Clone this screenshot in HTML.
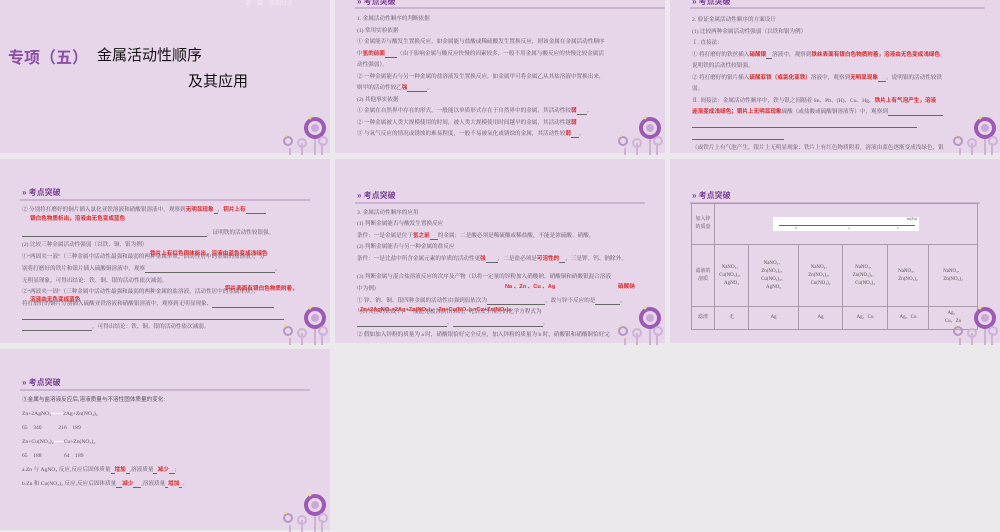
<!DOCTYPE html>
<html><head><meta charset="utf-8"><style>
*{margin:0;padding:0;box-sizing:border-box}
body{width:1000px;height:530px;background:#ebe9ec;position:relative;overflow:hidden;font-family:"Liberation Serif","Noto Serif CJK SC",serif;color:#555}
.p{position:absolute;background:#e7d6e9;overflow:hidden}
.t{position:absolute;font-size:5.6px;white-space:nowrap;line-height:1;color:#5a5060}
.r{color:#d42a2a;font-weight:bold;font-family:"Liberation Sans","Noto Sans CJK SC",sans-serif}
.u{display:inline-block;border-bottom:0.6px solid #666;vertical-align:bottom}
.h{position:absolute;font-family:"Liberation Sans","Noto Sans CJK SC",sans-serif;font-weight:bold;font-size:8px;color:#7a3f95;white-space:nowrap}
.hl{position:absolute;height:1.5px;background:#cdb3d3}
.deco{position:absolute;width:50px;height:42px}
table{border-collapse:collapse;position:absolute}
td{border:0.7px solid #a89aa9;font-size:5px;text-align:center;color:#555;line-height:1.6}
</style></head><body>

<!-- panel 1 -->
<div class="p" style="left:0;top:0;width:330px;height:153px">
<div class="t" style="left:245px;top:1px;color:#fff;opacity:.6;font-size:6px">第一篇　基础过关</div>
<div style="position:absolute;left:8px;top:44px;font:bold 16px 'Liberation Sans','Noto Sans CJK SC',sans-serif;color:#8a4fa6">专项（五）</div>
<div style="position:absolute;left:97px;top:44px;font:15px 'Liberation Sans','Noto Sans CJK SC',sans-serif;color:#111">金属活动性顺序</div>
<div style="position:absolute;left:188px;top:70px;font:15px 'Liberation Sans','Noto Sans CJK SC',sans-serif;color:#111">及其应用</div>
</div>

<!-- panel 2 -->
<div class="p" style="left:335px;top:0;width:330px;height:153px">
<div class="h" style="left:22px;top:-4px">» 考点突破</div>
<div class="hl" style="left:20px;top:7px;width:310px"></div>
<div class="t" style="left:22px;top:17px">1. 金属活动性顺序的判断依据</div>
<div class="t" style="left:22px;top:29px">(1) 常用实验依据</div>
<div class="t" style="left:22px;top:40px">① 金属能否与酸发生置换反应，如金属能与盐酸或稀硫酸发生置换反应，则该金属在金属活动性顺序</div>
<div class="t" style="left:22px;top:52px">中<span class="r">氢的前面</span><span class="u" style="width:12px"></span>（由于影响金属与酸反应快慢的因素较多，一般不用金属与酸反应的快慢比较金属活</div>
<div class="t" style="left:22px;top:63px">动性强弱）。</div>
<div class="t" style="left:22px;top:75px">② 一种金属能否与另一种金属的盐溶液发生置换反应，如金属甲可将金属乙从其盐溶液中置换出来，</div>
<div class="t" style="left:22px;top:86px">则甲的活动性较乙<span class="r">强</span><span class="u" style="width:20px"></span>。</div>
<div class="t" style="left:22px;top:98px">(2) 其他事实依据</div>
<div class="t" style="left:22px;top:109px">① 金属在自然界中存在的形式，一般能以单质形式存在于自然界中的金属，其活动性较<span class="r">弱</span><span class="u" style="width:10px"></span>。</div>
<div class="t" style="left:22px;top:121px">② 一种金属被人类大规模使用的时间，被人类大规模使用时间越早的金属，其活动性越<span class="r">弱</span></div>
<div class="t" style="left:22px;top:132px">③ 与氧气反应的情况或锈蚀的难易程度，一般不易被氧化或锈蚀的金属，其活动性较<span class="r">弱</span><span class="u" style="width:8px"></span>。</div>
</div>

<!-- panel 3 -->
<div class="p" style="left:670px;top:0;width:330px;height:153px">
<div class="h" style="left:22px;top:-4px">» 考点突破</div>
<div class="hl" style="left:20px;top:7px;width:295px"></div>
<div class="t" style="left:22px;top:18px">2. 验证金属活动性顺序的方案设计</div>
<div class="t" style="left:22px;top:30px">(1) 比较两种金属活动性强弱（以铁和银为例）</div>
<div class="t" style="left:22px;top:41px">Ⅰ. 直接法：</div>
<div class="t" style="left:22px;top:53px">① 将打磨好的铁丝插入<span class="r">硝酸银</span><span class="u" style="width:6px"></span>溶液中，观察到<span class="r">铁丝表面有银白色物质附着，溶液由无色变成浅绿色</span>，</div>
<div class="t" style="left:22px;top:64px">说明铁的活动性较银强。</div>
<div class="t" style="left:22px;top:76px">② 将打磨好的银片插入<span class="r">硫酸亚铁（或氯化亚铁）</span>溶液中，观察到<span class="r">无明显现象</span><span class="u" style="width:8px"></span>，说明银的活动性较铁</div>
<div class="t" style="left:22px;top:87px">弱。</div>
<div class="t" style="left:22px;top:99px">Ⅱ. 间接法：金属活动性顺序中，铁与银之间隔着 Sn、Pb、(H)、Cu、Hg，<span class="r">铁片上有气泡产生，溶液</span></div>
<div class="t" style="left:22px;top:110px"><span class="r">逐渐变成浅绿色；银片上无明显现象</span>硫酸（或盐酸或硫酸铜溶液等）中，观察到<span class="u" style="width:55px"></span></div>
<div class="t" style="left:22px;top:122px"><span class="u" style="width:225px"></span></div>
<div class="t" style="left:22px;top:134px"><span class="u" style="width:92px"></span></div>
<div class="t" style="left:22px;top:146px">（或铁片上有气泡产生，银片上无明显现象；铁片上有红色物质附着，溶液由蓝色逐渐变成浅绿色，银</div>
</div>

<!-- panel 4 -->
<div class="p" style="left:0;top:159px;width:330px;height:184px">
<div class="h" style="left:22px;top:28px">» 考点突破</div>
<div class="hl" style="left:20px;top:40px;width:290px"></div>
<div class="t" style="left:22px;top:49px">② 分别将打磨好的铜片插入氯化亚铁溶液和硝酸银溶液中，观察到<span class="r">无明显现象</span><span class="u" style="width:4px"></span>，<span class="r">铜片上有</span><span class="u" style="width:20px"></span></div>
<div class="t" style="left:30px;top:58px"><span class="r">银白色物质析出，溶液由无色变成蓝色</span></div>
<div class="t" style="left:22px;top:72px"><span class="u" style="width:185px"></span>，证明铁的活动性较银强。</div>
<div class="t" style="left:22px;top:84px">(2) 比较三种金属活动性强弱（以铁、铜、银为例）</div>
<div class="t" style="left:22px;top:96px">①“两固夹一液”（三种金属中活动性最强和最弱的两种金属单质，活动性居中的金属的盐溶液），分</div>
<div class="t" style="left:150px;top:93px"><span class="r">铁片上有红色固体析出，溶液由蓝色变成浅绿色</span></div>
<div class="t" style="left:22px;top:108px">别将打磨好的铁片和银片插入硫酸铜溶液中，观察<span class="u" style="width:130px"></span>，</div>
<div class="t" style="left:22px;top:120px">无明显现象，可得出结论：铁、铜、银的活动性依次减弱。</div>
<div class="t" style="left:22px;top:131px">②“两液夹一固”（三种金属中活动性最强和最弱的两种金属的盐溶液，活动性居中的金属单质），</div>
<div class="t" style="left:225px;top:128px"><span class="r">铜片表面有银白色物质附着，</span></div>
<div class="t" style="left:22px;top:143px">将打磨好的铜片分别插入硫酸亚铁溶液和硝酸银溶液中，观察到无明显现象、<span class="u" style="width:62px"></span></div>
<div class="t" style="left:30px;top:139px"><span class="r">溶液由无色变成蓝色</span></div>
<div class="t" style="left:22px;top:155px"><span class="u" style="width:262px"></span></div>
<div class="t" style="left:22px;top:166px"><span class="u" style="width:70px"></span>，可得出结论：铁、铜、银的活动性依次减弱。</div>
</div>

<!-- panel 5 -->
<div class="p" style="left:335px;top:159px;width:330px;height:184px">
<div class="h" style="left:22px;top:31px">» 考点突破</div>
<div class="hl" style="left:20px;top:43px;width:290px"></div>
<div class="t" style="left:22px;top:52px">3. 金属活动性顺序的应用</div>
<div class="t" style="left:22px;top:63px">(1) 判断金属能否与酸发生置换反应</div>
<div class="t" style="left:22px;top:75px">条件：一是金属是位于<span class="r">氢之前</span><span class="u" style="width:8px"></span>的金属；二是酸必须是稀硫酸或稀盐酸，不能是浓硫酸、硝酸。</div>
<div class="t" style="left:22px;top:86px">(2) 判断金属能否与另一种金属的盐反应</div>
<div class="t" style="left:22px;top:98px">条件：一是比盐中所含金属元素的单质的活动性更<span class="r">强</span><span class="u" style="width:12px"></span>，二是盐必须是<span class="r">可溶性的</span><span class="u" style="width:6px"></span>，三是钾、钙、钠除外。</div>
<div class="t" style="left:22px;top:116px">(3) 判断金属与混合盐溶液反应的次序及产物（以将一定量的锌粉加入硝酸钠、硝酸铜和硝酸银混合溶液</div>
<div class="t" style="left:22px;top:128px">中为例）</div>
<div class="t" style="left:170px;top:126px"><span class="r">Na 、Zn 、Cu 、Ag</span></div>
<div class="t" style="left:283px;top:126px"><span class="r">硝酸钠</span></div>
<div class="t" style="left:22px;top:140px">① 锌、钠、铜、银四种金属的活动性由强到弱依次为<span class="u" style="width:58px"></span>，故与锌不反应的是<span class="u" style="width:25px"></span>。</div>
<div class="t" style="left:22px;top:151px">与锌反应的铁或不，一般能先被置换出来的，先后发生反应的化学方程式为</div>
<div class="t" style="left:25px;top:149px"><span class="r">Zn+2AgNO₃=2Ag+Zn(NO₃)₂　Zn+Cu(NO₃)₂=Cu+Zn(NO₃)₂</span></div>
<div class="t" style="left:22px;top:162px"><span class="u" style="width:90px"></span>、<span class="u" style="width:90px"></span>。</div>
<div class="t" style="left:22px;top:174px">② 假如加入锌粉的质量为 a 时，硝酸银恰好完全反应，加入锌粉的质量为 b 时，硝酸银和硝酸铜恰好完</div>
</div>

<!-- panel 6 -->
<div class="p" style="left:670px;top:159px;width:330px;height:184px">
<div class="h" style="left:22px;top:31px">» 考点突破</div>
<div class="hl" style="left:20px;top:43px;width:290px"></div>
<table style="left:21px;top:44px;width:287px;height:127px">
<tr style="height:41px"><td style="width:23px">加入锌<br>的质量</td><td colspan="6"><div style="margin:0 auto;width:146px;height:14px;background:#fff;position:relative"><div style="position:absolute;left:6px;right:4px;top:8px;height:1px;background:#666"></div><span style="position:absolute;right:2px;top:-1px;font-size:4px">m(Zn)</span><span style="position:absolute;left:22px;top:9px;font-size:3.5px">0</span><span style="position:absolute;left:75px;top:9px;font-size:3.5px">a</span><span style="position:absolute;left:124px;top:9px;font-size:3.5px">b</span></div></td></tr>
<tr style="height:62px"><td>滤液的<br>溶质</td><td style="width:34px">NaNO₃、<br>Cu(NO₃)₂、<br>AgNO₃</td><td style="width:50px">NaNO₃、<br>Zn(NO₃)₂、<br>Cu(NO₃)₂、<br>AgNO₃</td><td style="width:44px">NaNO₃、<br>Zn(NO₃)₂、<br>Cu(NO₃)₂</td><td style="width:45px">NaNO₃、<br>Zn(NO₃)₂、<br>Cu(NO₃)₂</td><td style="width:41px">NaNO₃、<br>Zn(NO₃)₂</td><td>NaNO₃、<br>Zn(NO₃)₂</td></tr>
<tr><td>滤渣</td><td>无</td><td>Ag</td><td>Ag</td><td>Ag、Cu</td><td>Ag、Cu</td><td>Ag、<br>Cu、Zn</td></tr>
</table>
</div>

<!-- panel 7 -->
<div class="p" style="left:0;top:349px;width:330px;height:181px">
<div class="h" style="left:22px;top:28px">» 考点突破</div>
<div class="hl" style="left:20px;top:40px;width:290px"></div>
<div class="t" style="left:22px;top:49px;font-family:'Liberation Sans','Noto Sans CJK SC',sans-serif">③金属与盐溶液反应后,溶液质量与不溶性固体质量的变化:</div>
<div class="t" style="left:22px;top:63px">Zn+2AgNO₃<span style="display:inline-block;width:12px;border-top:1.5px double #fff;vertical-align:middle"></span>2Ag+Zn(NO₃)₂</div>
<div class="t" style="left:22px;top:77px">65　340　　　216　189</div>
<div class="t" style="left:22px;top:91px">Zn+Cu(NO₃)₂<span style="display:inline-block;width:10px;border-top:1.5px double #fff;vertical-align:middle"></span>Cu+Zn(NO₃)₂</div>
<div class="t" style="left:22px;top:105px">65　188　　　　64　189</div>
<div class="t" style="left:22px;top:119px">a.Zn 与 AgNO₃ 反应,反应后固体质量<span class="u" style="width:4px"></span><span class="r">增加</span><span class="u" style="width:4px"></span>,溶液质量<span class="u" style="width:4px"></span><span class="r">减少</span><span class="u" style="width:6px"></span>;</div>
<div class="t" style="left:22px;top:133px">b.Zn 和 Cu(NO₃)₂ 反应,反应后固体质量<span class="u" style="width:6px"></span><span class="r">减少</span><span class="u" style="width:8px"></span>,溶液质量<span class="u" style="width:3px"></span><span class="r">增加</span><span class="u" style="width:3px"></span>。</div>
</div>

<!-- decorations -->
<svg width="0" height="0" style="position:absolute"><defs>
<g id="d"><path d="M10 35V48M22 30V48M35 22V48M42 30V48" stroke="#cdb3d3" stroke-width="2" fill="none"/>
<circle cx="35" cy="15" r="9" fill="none" stroke="#9b5ab3" stroke-width="4"/><circle cx="35" cy="15" r="4" fill="#c9a8d6"/>
<circle cx="8" cy="28" r="4" fill="none" stroke="#b694c6" stroke-width="2"/><circle cx="22" cy="30" r="4" fill="none" stroke="#d0b2d8" stroke-width="2"/><circle cx="43" cy="28" r="4" fill="none" stroke="#d0b2d8" stroke-width="2"/>
<circle cx="30" cy="5" r="1.5" fill="#e8d870"/><circle cx="6" cy="23" r="1.2" fill="#e8d870"/></g></defs></svg>
<svg class="deco" style="left:280px;top:113px" viewBox="0 0 50 42"><use href="#d"/></svg>
<svg class="deco" style="left:615px;top:113px" viewBox="0 0 50 42"><use href="#d"/></svg>
<svg class="deco" style="left:950px;top:113px" viewBox="0 0 50 42"><use href="#d"/></svg>
<svg class="deco" style="left:280px;top:303px" viewBox="0 0 50 42"><use href="#d"/></svg>
<svg class="deco" style="left:615px;top:303px" viewBox="0 0 50 42"><use href="#d"/></svg>
<svg class="deco" style="left:950px;top:303px" viewBox="0 0 50 42"><use href="#d"/></svg>
<svg class="deco" style="left:280px;top:490px" viewBox="0 0 50 42"><use href="#d"/></svg>
</body></html>
